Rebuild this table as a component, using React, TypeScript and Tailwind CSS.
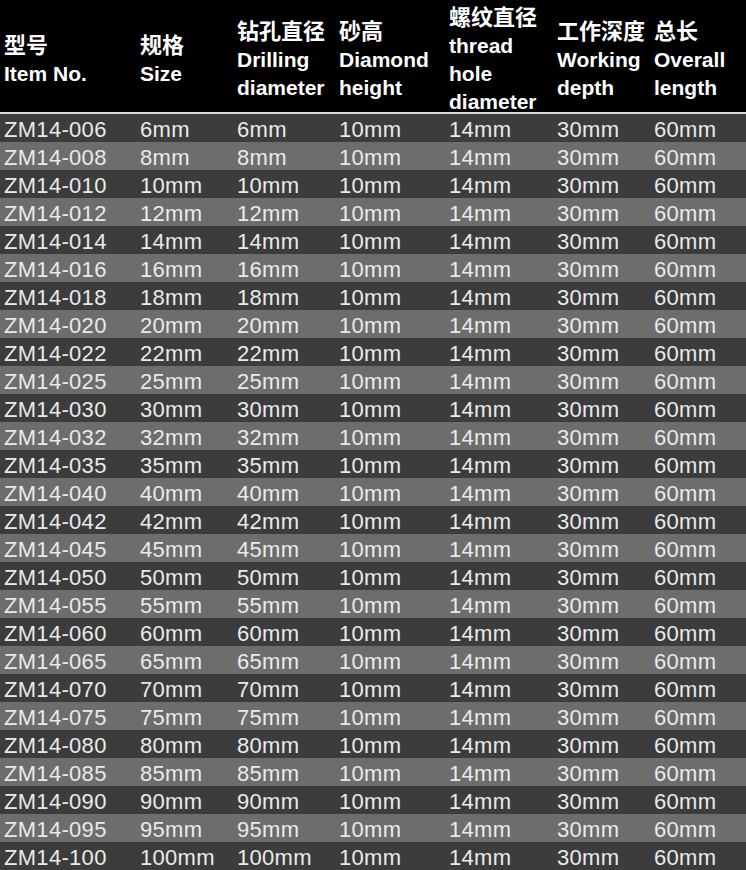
import React from "react";

const sizes = [6, 8, 10, 12, 14, 16, 18, 20, 22, 25, 30, 32, 35, 40, 42, 45, 50, 55, 60, 65, 70, 75, 80, 85, 90, 95, 100];

const headers: { zh: string; en: string[] }[] = [
  { zh: "型号", en: ["Item No."] },
  { zh: "规格", en: ["Size"] },
  { zh: "钻孔直径", en: ["Drilling", "diameter"] },
  { zh: "砂高", en: ["Diamond", "height"] },
  { zh: "螺纹直径", en: ["thread", "hole", "diameter"] },
  { zh: "工作深度", en: ["Working", "depth"] },
  { zh: "总长", en: ["Overall", "length"] },
];

const grid = "grid grid-cols-[136px_97px_102px_110px_108px_97px_1fr] pl-[4px]";

export default function App() {
  return (
    <div className="w-[746px] h-[870px] bg-[#3c3c3c] overflow-hidden">
      <div
        className={`${grid} h-[112px] bg-black text-white font-bold text-[21px] leading-[28px] pt-[4px]`}
        style={{ fontFamily: '"Liberation Sans", "Noto Sans CJK SC", sans-serif' }}
      >
        {headers.map((h, i) => (
          <div key={i} className="flex flex-col justify-center whitespace-nowrap">
            <div className="text-[22px]">{h.zh}</div>
            {h.en.map((e, j) => (
              <div key={j}>{e}</div>
            ))}
          </div>
        ))}
      </div>
      <div className="h-[2px] bg-[#d9d9d9]" />
      <div
        className="text-[#eaeaea] text-[22px] leading-[24px] tracking-[0.3px]"
        style={{ fontFamily: '"Liberation Sans", sans-serif' }}
      >
        {sizes.map((s, i) => {
          const code = String(s).padStart(3, "0");
          return (
            <div
              key={s}
              className={`${grid} h-[28px] pt-[4px] ${i % 2 === 0 ? "bg-[#3c3c3c]" : "bg-[#6d6d6d]"}`}
            >
              <div>ZM14-{code}</div>
              <div>{s}mm</div>
              <div>{s}mm</div>
              <div>10mm</div>
              <div>14mm</div>
              <div>30mm</div>
              <div>60mm</div>
            </div>
          );
        })}
      </div>
    </div>
  );
}
